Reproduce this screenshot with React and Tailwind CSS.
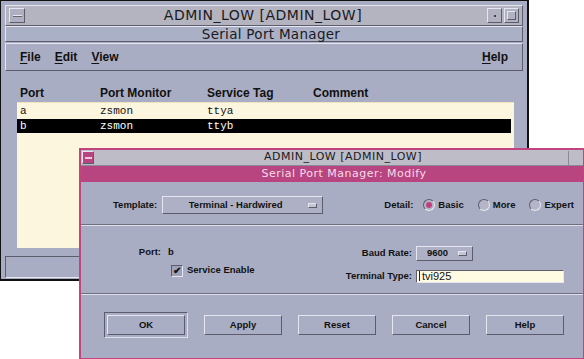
import React from "react";

const raised = "border border-t-[#e6e6f0] border-l-[#e6e6f0] border-b-[#5c5c6c] border-r-[#5c5c6c]";
const sunken = "border border-t-[#5c5c6c] border-l-[#5c5c6c] border-b-[#e6e6f0] border-r-[#e6e6f0]";

const Etched = () => (
  <div className="h-[2px] border-t border-t-[#6e7082] border-b border-b-[#dfe0ea]" />
);

const Mnemonic = ({ text }) => (
  <span>
    <span className="underline underline-offset-2">{text[0]}</span>
    {text.slice(1)}
  </span>
);

const Radio = ({ label, checked }) => (
  <div className="flex items-center gap-[3px]">
    <span className={`w-[12px] h-[12px] rounded-full flex items-center justify-center ${sunken} bg-[#b4b6c8]`}>
      {checked && <span className="w-[6px] h-[6px] rounded-full bg-[#c0407c]" />}
    </span>
    <span>{label}</span>
  </div>
);

const Dropdown = ({ label, width, height }) => (
  <div className={`flex items-center ${raised} bg-[#aeb1c6] ${width} ${height}`}>
    <span className="flex-1 text-center">{label}</span>
    <span className={`w-[9px] h-[5px] mr-[5px] ${raised} bg-[#c4c6d4]`} />
  </div>
);

const Button = ({ children }) => (
  <div className={`w-[78px] h-[20px] flex items-center justify-center ${raised} bg-[#aaaec4]`}>
    {children}
  </div>
);

const MainWindow = () => (
  <div className="absolute left-0 top-0 w-[529px] h-[281px] border border-[#111] border-r-2 border-b-2 bg-[#a9adc4] flex flex-col px-[4px] pt-[4px]">
    {/* title bar */}
    <div className={`h-[21px] flex items-center bg-[#b4b3c0] ${raised}`}>
      <div className={`ml-[3px] w-[16px] h-[15px] flex items-center justify-center ${raised} bg-[#aeb0c2]`}>
        <span className="w-[9px] h-[2px] bg-[#e8e8f0] border-b border-[#666]" />
      </div>
      <div className="flex-1 text-center pl-[14px] font-['DejaVu_Sans',sans-serif] text-[14px] tracking-[0.5px] text-[#1a1a22]">
        ADMIN_LOW [ADMIN_LOW]
      </div>
      <div className={`w-[15px] h-[15px] flex items-center justify-center ${raised} bg-[#b0b2c2]`}>
        <span className="w-[2px] h-[2px] bg-[#444]" />
      </div>
      <div className={`ml-[2px] mr-[3px] w-[15px] h-[15px] flex items-center justify-center ${raised} bg-[#b0b2c2]`}>
        <span className={`w-[9px] h-[9px] ${raised}`} />
      </div>
    </div>
    <div className={`h-[16px] flex items-center justify-center bg-[#aab0c6] ${raised} font-['DejaVu_Sans',sans-serif] text-[13.5px] tracking-[0.3px] text-[#1a1a22] pl-[14px]`}>
      Serial Port Manager
    </div>
    {/* menubar */}
    <div className={`mt-[1px] h-[28px] flex items-center px-[14px] gap-[14px] font-bold text-[12px] text-[#111] ${raised}`}>
      <Mnemonic text="File" />
      <Mnemonic text="Edit" />
      <Mnemonic text="View" />
      <div className="flex-1" />
      <Mnemonic text="Help" />
    </div>
    {/* list */}
    <div className="pl-[12px] pr-[9px] flex flex-col">
      <div className="mt-[14px] h-[16px] flex items-center font-bold text-[12px] text-[#111] pl-[3px]">
        <span className="w-[80px]">Port</span>
        <span className="w-[107px]">Port Monitor</span>
        <span className="w-[106px]">Service Tag</span>
        <span>Comment</span>
      </div>
      <div className="mt-[1px] h-[146px] bg-[#fcf6df] border-t border-[#eee4c0] font-['Liberation_Mono',monospace] text-[11px] pr-[3px]">
        <div className="h-[16px] flex items-center pl-[3px] text-[#111]">
          <span className="w-[80px]">a</span>
          <span className="w-[107px]">zsmon</span>
          <span>ttya</span>
        </div>
        <div className="h-[14px] flex items-center pl-[3px] bg-black text-white">
          <span className="w-[80px]">b</span>
          <span className="w-[107px]">zsmon</span>
          <span>ttyb</span>
        </div>
      </div>
    </div>
    <div className={`mt-[8px] mx-0 h-[22px] ${sunken}`} />
  </div>
);

const ModifyDialog = () => (
  <div className="absolute left-[79px] top-[148px] w-[506px] h-[212px] border-2 border-[#c0457e] bg-[#a9adc4] flex flex-col text-[9.5px] font-bold text-[#111]">
    <div className="h-[16px] flex items-center bg-[#bebcc6] border-b border-[#8a8a96]">
      <div className={`ml-[1px] w-[12px] h-[13px] flex items-center justify-center ${raised} bg-[#b8457f]`}>
        <span className="w-[7px] h-[2px] bg-[#f0c8dc]" />
      </div>
      <div className="flex-1 text-center pl-[24px] font-['DejaVu_Sans',sans-serif] font-normal text-[11px] tracking-[0.5px] text-[#1a1a22]">
        ADMIN_LOW [ADMIN_LOW]
      </div>
      <div className="w-[1px] h-[14px] bg-[#8a8a96] mr-[14px]" />
    </div>
    <div className="h-[16px] flex items-center justify-center bg-[#b8457f] pl-[24px] font-['DejaVu_Sans',sans-serif] font-normal text-[11px] tracking-[0.5px] text-[#f6dcea]">
      Serial Port Manager: Modify
    </div>
    {/* template row */}
    <div className="mt-[14px] h-[18px] flex items-center pl-[32px] pr-[9px]">
      <span>Template:</span>
      <div className="ml-[5px]">
        <Dropdown label="Terminal - Hardwired" width="w-[161px]" height="h-[18px]" />
      </div>
      <div className="flex-1" />
      <span>Detail:</span>
      <div className="ml-[10px] flex items-center gap-[14px]">
        <Radio label="Basic" checked />
        <Radio label="More" />
        <Radio label="Expert" />
      </div>
    </div>
    <div className="mt-[10px]">
      <Etched />
    </div>
    {/* port section */}
    <div className="h-[67px] flex">
      <div className="w-[250px] flex flex-col">
        <div className="mt-[20px] h-[12px] flex items-center">
          <span className="w-[80px] text-right">Port:</span>
          <span className="ml-[7px]">b</span>
        </div>
        <div className="mt-[6px] h-[13px] flex items-center pl-[90px]">
          <span className={`w-[12px] h-[12px] flex items-center justify-center ${sunken} bg-[#9ea2b8] text-[10px] leading-none`}>
            ✔
          </span>
          <span className="ml-[4px]">Service Enable</span>
        </div>
      </div>
      <div className="grid grid-cols-[81px_auto] gap-x-[4px] gap-y-[8px] items-center content-start mt-[20px]">
        <span className="text-right">Baud Rate:</span>
        <Dropdown label="9600" width="w-[57px]" height="h-[15px]" />
        <span className="text-right">Terminal Type:</span>
        <div className={`w-[148px] h-[13px] flex items-center bg-[#fffbe2] ${sunken} pl-[2px] font-normal text-[11px]`}>
          <span className="w-[1px] h-[10px] bg-[#222] mr-[2px]" />
          tvi925
        </div>
      </div>
    </div>
    <Etched />
    {/* buttons */}
    <div className="mt-[17px] flex items-center pl-[23px] gap-[16px]">
      <div className="p-[2px] border border-[#5c5c6c] border-b-[#e0e0ea] border-r-[#e0e0ea]">
        <Button>OK</Button>
      </div>
      <Button>Apply</Button>
      <Button>Reset</Button>
      <Button>Cancel</Button>
      <Button>Help</Button>
    </div>
  </div>
);

export default function App() {
  return (
    <div className="relative w-[584px] h-[359px] overflow-hidden bg-white font-['Liberation_Sans',Arial,sans-serif]">
      <MainWindow />
      <ModifyDialog />
    </div>
  );
}
